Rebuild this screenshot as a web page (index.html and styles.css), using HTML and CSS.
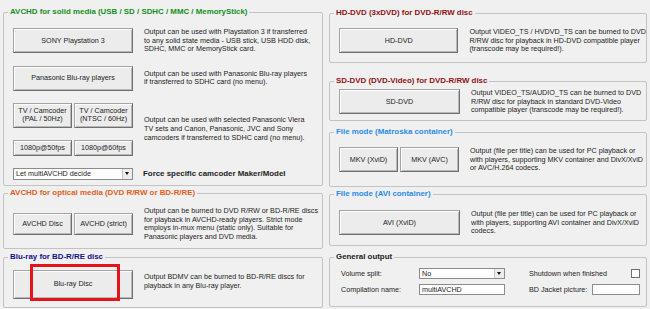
FILE: index.html
```html
<!DOCTYPE html>
<html lang="en">
<head>
    <meta charset="UTF-8">
    <meta name="viewport" content="width=device-width, initial-scale=1.0">
    <title>multiAVCHD - Output</title>
    <link rel="stylesheet" href="styles.css">
</head>
<body>
    <div class="window">
        <div class="col col-left">
            <section class="box box-solid">
                <span class="legend legend-green">AVCHD for solid media (USB / SD / SDHC / MMC / MemoryStick)</span>
                <div class="row">
                    <button class="btn btn-wide">SONY Playstation 3</button>
                    <p class="desc">Output can be used with Playstation 3 if transferred<br>to any solid state media - USB stick, USB HDD disk,<br>SDHC, MMC or MemoryStick card.</p>
                </div>
                <div class="row">
                    <button class="btn btn-wide">Panasonic Blu-ray players</button>
                    <p class="desc">Output can be used with Panasonic Blu-ray players<br>if transferred to SDHC card (no menu).</p>
                </div>
                <div class="row">
                    <div class="btn-grid">
                        <button class="btn btn-half">TV / Camcoder<br>(PAL / 50Hz)</button>
                        <button class="btn btn-half">TV / Camcoder<br>(NTSC / 60Hz)</button>
                        <button class="btn btn-half btn-short">1080p@50fps</button>
                        <button class="btn btn-half btn-short">1080p@60fps</button>
                    </div>
                    <p class="desc">Output can be used with selected Panasonic Viera<br>TV sets and Canon, Panasonic, JVC and Sony<br>camcoders if transferred to SDHC card (no menu).</p>
                </div>
                <div class="row">
                    <div class="combo combo-maker"><span>Let multiAVCHD decide</span><span class="combo-arrow"></span></div>
                    <strong class="force">Force specific camcoder Maker/Model</strong>
                </div>
            </section>

            <section class="box box-optical">
                <span class="legend legend-orange">AVCHD for optical media (DVD R/RW or BD-R/RE)</span>
                <div class="row">
                    <div class="btn-pair">
                        <button class="btn btn-half btn-mid">AVCHD Disc</button>
                        <button class="btn btn-half btn-mid">AVCHD (strict)</button>
                    </div>
                    <p class="desc">Output can be burned to DVD R/RW or BD-R/RE discs<br>for playback in AVCHD-ready players. Strict mode<br>employs in-mux menu (static only). Suitable for<br>Panasonic players and DVD media.</p>
                </div>
            </section>

            <section class="box box-bluray">
                <span class="legend legend-navy">Blu-ray for BD-R/RE disc</span>
                <div class="row row-top">
                    <button class="btn btn-wide btn-tall btn-marked">Blu-ray Disc<span class="mark"></span></button>
                    <p class="desc desc-low">Output BDMV can be burned to BD-R/RE discs for<br>playback in any Blu-ray player.</p>
                </div>
            </section>
        </div>

        <div class="col col-right">
            <section class="box box-hddvd">
                <span class="legend legend-red">HD-DVD (3xDVD) for DVD-R/RW disc</span>
                <div class="row">
                    <button class="btn btn-wide">HD-DVD</button>
                    <p class="desc">Output VIDEO_TS / HVDVD_TS can be burned to DVD<br>R/RW disc for playback in HD-DVD compatible player<br>(transcode may be required!).</p>
                </div>
            </section>

            <section class="box box-sddvd">
                <span class="legend legend-red">SD-DVD (DVD-Video) for DVD-R/RW disc</span>
                <div class="row">
                    <button class="btn btn-wide">SD-DVD</button>
                    <p class="desc">Output VIDEO_TS/AUDIO_TS can be burned to DVD<br>R/RW disc for playback in standard DVD-Video<br>compatible player (transcode may be required!).</p>
                </div>
            </section>

            <section class="box box-mkv">
                <span class="legend legend-blue">File mode (Matroska container)</span>
                <div class="row">
                    <div class="btn-pair">
                        <button class="btn btn-half">MKV (XviD)</button>
                        <button class="btn btn-half">MKV (AVC)</button>
                    </div>
                    <p class="desc">Output (file per title) can be used for PC playback or<br>with players, supporting MKV container and DivX/XviD<br>or AVC/H.264 codecs.</p>
                </div>
            </section>

            <section class="box box-avi">
                <span class="legend legend-blue">File mode (AVI container)</span>
                <div class="row">
                    <button class="btn btn-wide">AVI (XviD)</button>
                    <p class="desc">Output (file per title) can be used for PC playback or<br>with players, supporting AVI container and DivX/XviD<br>codecs.</p>
                </div>
            </section>

            <section class="box box-general">
                <span class="legend legend-black">General output</span>
                <div class="general-grid">
                    <span>Volume split:</span>
                    <div class="combo"><span>No</span><span class="combo-arrow"></span></div>
                    <span></span>
                    <span>Shutdown when finished</span>
                    <span class="check"></span>

                    <span>Compilation name:</span>
                    <input class="field" type="text" value="multiAVCHD">
                    <span></span>
                    <span>BD Jacket picture:</span>
                    <input class="field" type="text" value="">
                </div>
            </section>
        </div>
    </div>
</body>
</html>
```

FILE: styles.css
```css
body {
    margin: 0;
    background-color: #f0f0f0;
    font-family: "Liberation Sans", Arial, sans-serif;
    font-size: 7.2px;
    color: #1c1c1c;
}

.window {
    display: flex;
    gap: 6px;
    padding: 0 3px;
}

.col {
    display: flex;
    flex-direction: column;
}

.col-left {
    width: 320px;
}

.col-right {
    width: 318px;
}

/* group boxes */
.box {
    position: relative;
    box-sizing: border-box;
    border: 1px solid #c3c3c3;
    border-radius: 2px;
    padding-left: 9px;
}

.legend {
    position: absolute;
    top: -6px;
    left: 4px;
    padding: 0 2px;
    background-color: #f0f0f0;
    font-weight: bold;
    font-size: 7.9px;
    line-height: 10px;
    white-space: nowrap;
}

.legend-green { color: #13901a; }
.legend-orange { color: #e2601c; }
.legend-navy { color: #10108a; }
.legend-red { color: #8e1212; }
.legend-blue { color: #2a8be6; }
.legend-black { color: #1c1c1c; }

.box-solid {
    margin-top: 12px;
    height: 174px;
    padding-top: 15px;
    display: flex;
    flex-direction: column;
    gap: 12px;
}

.box-optical {
    margin-top: 7px;
    height: 56px;
    padding-top: 13px;
}

.box-bluray {
    margin-top: 8px;
    height: 51px;
    padding-top: 12px;
}

.box-hddvd {
    margin-top: 13px;
    height: 50px;
    padding-top: 14px;
}

.box-sddvd {
    margin-top: 18px;
    height: 40px;
    padding-top: 7px;
}

.box-mkv {
    margin-top: 11px;
    height: 55px;
    padding-top: 14px;
}

.box-avi {
    margin-top: 7px;
    height: 52px;
    padding-top: 15px;
}

.box-general {
    margin-top: 11px;
    height: 50px;
    padding-top: 10px;
    padding-left: 11px;
}

/* rows */
.row {
    display: flex;
    align-items: center;
}

.row-top {
    align-items: flex-start;
}

.desc {
    margin: 0 0 0 11px;
    line-height: 8.6px;
    white-space: nowrap;
}

.desc-low {
    margin-top: 3px;
}

.force {
    margin-left: 10px;
    font-size: 7.9px;
}

/* buttons */
.btn {
    box-sizing: border-box;
    height: 25px;
    padding: 0;
    font: inherit;
    font-size: 7.2px;
    line-height: 8.3px;
    color: #1c1c1c;
    background-color: #ececec;
    border: 1px solid #a4a4a4;
    border-right-color: #6f6f6f;
    border-bottom-color: #6f6f6f;
    box-shadow: inset 1px 1px #fdfdfd, inset -1px -1px #b9b9b9;
}

.btn-wide {
    width: 120px;
}

.col-right .btn-wide {
    width: 121px;
}

.btn-half {
    width: 59px;
}

.btn-short {
    height: 16px;
}

.btn-mid {
    height: 22px;
}

.btn-tall {
    height: 29px;
}

.btn-grid {
    display: grid;
    grid-template-columns: 59px 59px;
    grid-template-rows: 25px 16px;
    column-gap: 2px;
    row-gap: 12px;
}

.btn-pair {
    display: flex;
    gap: 2px;
}

.btn-marked {
    position: relative;
}

.mark {
    position: absolute;
    left: 16px;
    top: -7px;
    width: 90px;
    height: 37px;
    box-sizing: border-box;
    border: 3px solid #e3151b;
}

/* inputs */
.combo {
    box-sizing: border-box;
    display: flex;
    align-items: center;
    justify-content: space-between;
    height: 11px;
    padding-left: 2px;
    background-color: #fff;
    border: 1px solid #8c8c8c;
}

.combo-maker {
    width: 120px;
    height: 12px;
}

.combo-arrow {
    box-sizing: border-box;
    width: 10px;
    height: 100%;
    background-color: #ededed;
    border-left: 1px solid #c8c8c8;
    position: relative;
}

.combo-arrow::after {
    content: "";
    position: absolute;
    left: 2px;
    top: 3px;
    border-left: 2.5px solid transparent;
    border-right: 2.5px solid transparent;
    border-top: 3px solid #111;
}

.general-grid {
    display: grid;
    grid-template-columns: 78px 86px 24px 63px 48px;
    grid-template-rows: 11px 11px;
    row-gap: 5px;
    align-items: center;
    white-space: nowrap;
}

.field {
    box-sizing: border-box;
    width: 100%;
    height: 11px;
    margin: 0;
    padding: 0 2px;
    font: inherit;
    color: #1c1c1c;
    background-color: #fff;
    border: 1px solid #8c8c8c;
    outline: none;
}

.check {
    justify-self: end;
    width: 9px;
    height: 9px;
    box-sizing: border-box;
    background-color: #fff;
    border: 1px solid #707070;
}
```
